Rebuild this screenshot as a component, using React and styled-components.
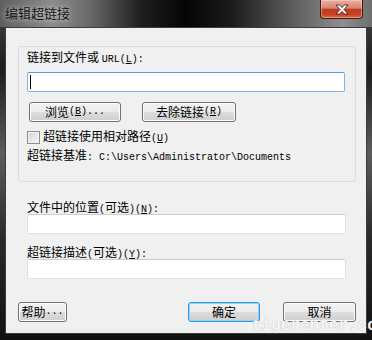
import React from "react";
import styled, { createGlobalStyle } from "styled-components";

const GlobalStyle = createGlobalStyle`
  html, body {
    margin: 0;
    padding: 0;
    background: #000;
  }
  body {
    font-family: "Noto Sans CJK SC", "Liberation Sans", sans-serif;
    font-size: 12px;
  }
`;

const Window = styled.div`
  position: relative;
  width: 372px;
  height: 340px;
  box-sizing: border-box;
  padding: 0 5px 6px 5px;
  display: flex;
  flex-direction: column;
  overflow: hidden;
  background: linear-gradient(180deg, #4a4a4a 0%, #1c1c1c 20%, #5c5c5c 45%, #2a2a2a 70%, #111 100%);
`;

const TitleBar = styled.div`
  height: 27px;
  margin: 0 -5px;
  padding: 0 9px 0 5px;
  display: flex;
  align-items: flex-start;
  justify-content: space-between;
  background: linear-gradient(
    90deg,
    #5e5e5e 0%,
    #8c8c8c 14%,
    #6a6a6a 24%,
    #1e1e1e 38%,
    #050505 50%,
    #1a1a1a 62%,
    #5a5a5a 78%,
    #8e8e8e 92%,
    #6e6e6e 100%
  );
`;

const Title = styled.span`
  margin-top: 6px;
  font-size: 13px;
  line-height: 14px;
  color: #141414;
  text-shadow: 0 0 4px rgba(255, 255, 255, 0.55), 0 0 8px rgba(255, 255, 255, 0.35);
`;

const CloseButton = styled.div`
  width: 43px;
  height: 19px;
  box-sizing: border-box;
  border: 1px solid #3a1a12;
  border-top: none;
  border-radius: 0 0 4px 4px;
  display: flex;
  align-items: center;
  justify-content: center;
  background: linear-gradient(180deg, #eab0a3 0%, #d88470 45%, #c13a1f 52%, #c8401f 80%, #de6a45 100%);
  box-shadow: inset 0 0 0 1px rgba(255, 220, 210, 0.45);
`;

const Client = styled.div`
  flex: 1;
  border: 1px solid #3c3c3c;
  background: #f0f0f0;
  display: flex;
  flex-direction: column;
`;

const GroupBox = styled.div`
  margin: 18px 10px 0 12px;
  padding: 3px 10px 19px 8px;
  border: 1px solid #d5dfe5;
  border-radius: 3px;
  display: flex;
  flex-direction: column;
`;

const Section = styled.div`
  padding: 0 20px 0 21px;
  display: flex;
  flex-direction: column;
`;

const Label = styled.div`
  line-height: 14px;
  height: 14px;
  margin-top: ${({ $top }) => $top || 0}px;
  color: #000;
  white-space: nowrap;
`;

const Latin = styled.span`
  font-family: "Liberation Mono", "DejaVu Sans Mono", monospace;
  font-size: 10px;
`;

const Field = styled.div`
  height: 20px;
  margin-top: ${({ $top }) => $top || 0}px;
  box-sizing: border-box;
  background: #fff;
  border: 1px solid ${({ $focused }) => ($focused ? "#7eb4ea" : "#dde1e6")};
  border-top-color: ${({ $focused }) => ($focused ? "#569de5" : "#c9ced4")};
  border-radius: 2px;
  padding: 2px 2px;
  display: flex;
  align-items: center;
`;

const Caret = styled.span`
  width: 1px;
  height: 14px;
  background: #000;
`;

const ButtonRow = styled.div`
  margin-top: 10px;
  padding-left: 2px;
  display: flex;
  gap: 21px;
`;

const Button = styled.div`
  width: ${({ $w }) => $w}px;
  height: 20px;
  box-sizing: border-box;
  border: 1px solid ${({ $default }) => ($default ? "#3399dd" : "#707070")};
  border-radius: 3px;
  display: flex;
  align-items: center;
  justify-content: center;
  white-space: nowrap;
  color: #000;
  line-height: 14px;
  background: ${({ $default }) =>
    $default
      ? "linear-gradient(180deg, #eaf6fd 0%, #d9f0fc 50%, #bee6fd 51%, #a7d9f5 100%)"
      : "linear-gradient(180deg, #f2f2f2 0%, #ebebeb 50%, #dddddd 51%, #cfcfcf 100%)"};
  box-shadow: inset 0 0 0 1px ${({ $default }) => ($default ? "#8fd3f8" : "#fcfcfc")};
  ${({ $default }) => ($default ? "background: linear-gradient(180deg, #f2f2f2 0%, #ebebeb 50%, #dddddd 51%, #cfcfcf 100%);" : "")}
`;

const CheckRow = styled.div`
  margin-top: 8px;
  height: 14px;
  display: flex;
  align-items: center;
  gap: 3px;
  line-height: 14px;
`;

const CheckBox = styled.span`
  width: 13px;
  height: 13px;
  box-sizing: border-box;
  border: 1px solid #8f8f8f;
  background: linear-gradient(135deg, #d2d2d2 0%, #e6e6e6 50%, #f6f6f6 100%);
  box-shadow: inset 0 0 0 1px #f4f4f4;
`;

const PathRow = styled.div`
  margin-top: 4px;
  height: 14px;
  line-height: 14px;
  white-space: nowrap;
`;

const Footer = styled.div`
  margin-top: 23px;
  padding: 0 10px 0 12px;
  display: flex;
  align-items: center;
`;

const Spacer = styled.div`
  flex: 1;
`;

const FooterGap = styled.div`
  width: 23px;
`;

const Watermark = styled.div`
  position: absolute;
  left: 252px;
  top: 317px;
  font-family: "Liberation Mono", "DejaVu Sans Mono", monospace;
  font-size: 16px;
  font-weight: bold;
  color: rgba(255, 255, 255, 0.92);
  text-shadow: 0 0 1px rgba(120, 120, 120, 0.6);
  white-space: nowrap;
  pointer-events: none;
`;

const Key = ({ k }) => (
  <Latin>
    (<u>{k}</u>)
  </Latin>
);

const CloseIcon = () => (
  <svg width="14" height="11" viewBox="0 0 14 11">
    <path
      d="M1 1 L4.5 1 L7 3.6 L9.5 1 L13 1 L9 5.5 L13 10 L9.5 10 L7 7.4 L4.5 10 L1 10 L5 5.5 Z"
      fill="#ffffff"
      stroke="#4a2016"
      strokeWidth="0.9"
      strokeLinejoin="round"
    />
  </svg>
);

const App = () => (
  <>
    <GlobalStyle />
    <Window>
      <TitleBar>
        <Title>编辑超链接</Title>
        <CloseButton>
          <CloseIcon />
        </CloseButton>
      </TitleBar>
      <Client>
        <GroupBox>
          <Label>
            链接到文件或 <Latin>URL</Latin>
            <Key k="L" />
            <Latin>:</Latin>
          </Label>
          <Field $top={8} $focused>
            <Caret />
          </Field>
          <ButtonRow>
            <Button $w={92}>
              浏览<Key k="B" />
              <Latin>...</Latin>
            </Button>
            <Button $w={94}>
              去除链接<Key k="R" />
            </Button>
          </ButtonRow>
          <CheckRow>
            <CheckBox />
            <span>
              超链接使用相对路径<Key k="U" />
            </span>
          </CheckRow>
          <PathRow>
            超链接基准<Latin>:  C:\Users\Administrator\Documents</Latin>
          </PathRow>
        </GroupBox>
        <Section>
          <Label $top={18}>
            文件中的位置<Latin>(</Latin>可选<Latin>)</Latin>
            <Key k="N" />
            <Latin>:</Latin>
          </Label>
          <Field />
          <Label $top={11}>
            超链接描述<Latin>(</Latin>可选<Latin>)</Latin>
            <Key k="Y" />
            <Latin>:</Latin>
          </Label>
          <Field />
        </Section>
        <Footer>
          <Button $w={49}>
            帮助<Latin>...</Latin>
          </Button>
          <Spacer />
          <Button $w={72} $default>
            确定
          </Button>
          <FooterGap />
          <Button $w={73}>取消</Button>
        </Footer>
      </Client>
      <Watermark>tigerenter.com</Watermark>
    </Window>
  </>
);

export default App;
